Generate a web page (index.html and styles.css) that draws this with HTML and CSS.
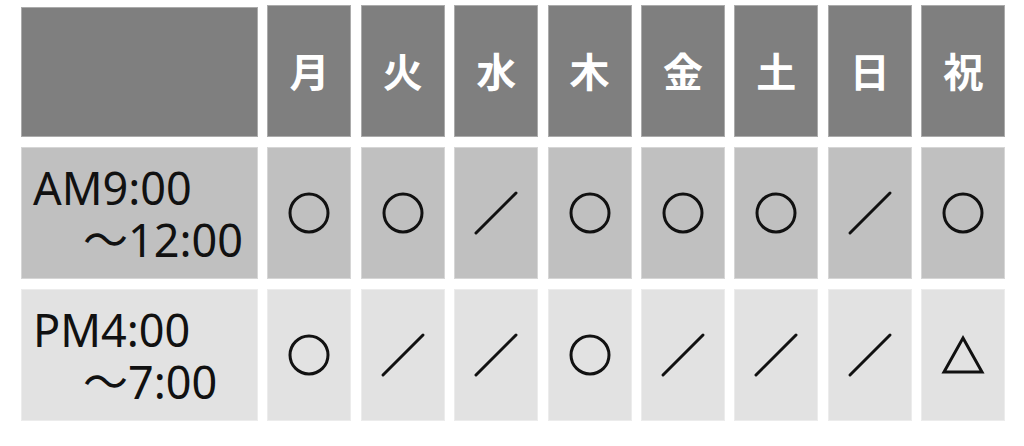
FILE: index.html
```html
<!DOCTYPE html>
<html lang="ja">
<head>
    <meta charset="UTF-8">
    <meta name="viewport" content="width=device-width, initial-scale=1.0">
    <link rel="stylesheet" href="styles.css">
</head>
<body>
    <div class="timetable">
        <!-- header row -->
        <div class="cell head corner"></div>
        <div class="cell head">月</div>
        <div class="cell head">火</div>
        <div class="cell head">水</div>
        <div class="cell head">木</div>
        <div class="cell head">金</div>
        <div class="cell head">土</div>
        <div class="cell head">日</div>
        <div class="cell head">祝</div>

        <!-- morning -->
        <div class="cell am time">
            <span class="from">AM9:00</span>
            <span class="to"><span class="wave">～</span>12:00</span>
        </div>
        <div class="cell am"><svg class="mark" viewBox="0 0 46 46"><circle cx="23" cy="23" r="19"/></svg></div>
        <div class="cell am"><svg class="mark" viewBox="0 0 46 46"><circle cx="23" cy="23" r="19"/></svg></div>
        <div class="cell am"><svg class="mark" viewBox="0 0 46 46"><line x1="3" y1="43" x2="43" y2="3"/></svg></div>
        <div class="cell am"><svg class="mark" viewBox="0 0 46 46"><circle cx="23" cy="23" r="19"/></svg></div>
        <div class="cell am"><svg class="mark" viewBox="0 0 46 46"><circle cx="23" cy="23" r="19"/></svg></div>
        <div class="cell am"><svg class="mark" viewBox="0 0 46 46"><circle cx="23" cy="23" r="19"/></svg></div>
        <div class="cell am"><svg class="mark" viewBox="0 0 46 46"><line x1="3" y1="43" x2="43" y2="3"/></svg></div>
        <div class="cell am"><svg class="mark" viewBox="0 0 46 46"><circle cx="23" cy="23" r="19"/></svg></div>

        <!-- evening -->
        <div class="cell pm time">
            <span class="from">PM4:00</span>
            <span class="to"><span class="wave">～</span>7:00</span>
        </div>
        <div class="cell pm"><svg class="mark" viewBox="0 0 46 46"><circle cx="23" cy="23" r="19"/></svg></div>
        <div class="cell pm"><svg class="mark" viewBox="0 0 46 46"><line x1="3" y1="43" x2="43" y2="3"/></svg></div>
        <div class="cell pm"><svg class="mark" viewBox="0 0 46 46"><line x1="3" y1="43" x2="43" y2="3"/></svg></div>
        <div class="cell pm"><svg class="mark" viewBox="0 0 46 46"><circle cx="23" cy="23" r="19"/></svg></div>
        <div class="cell pm"><svg class="mark" viewBox="0 0 46 46"><line x1="3" y1="43" x2="43" y2="3"/></svg></div>
        <div class="cell pm"><svg class="mark" viewBox="0 0 46 46"><line x1="3" y1="43" x2="43" y2="3"/></svg></div>
        <div class="cell pm"><svg class="mark" viewBox="0 0 46 46"><line x1="3" y1="43" x2="43" y2="3"/></svg></div>
        <div class="cell pm"><svg class="mark" viewBox="0 0 46 46"><polygon points="23,6 42,40 4,40"/></svg></div>
    </div>
</body>
</html>
```

FILE: styles.css
```css
* {
    margin: 0;
    padding: 0;
    box-sizing: border-box;
}
body {
    background-color: #FFFFFF;
    font-family: "Noto Sans", "Noto Sans CJK JP", sans-serif;
    color: #111;
}

/* Grid */
.timetable {
    display: grid;
    grid-template-columns: 237px repeat(8, 84px);
    grid-auto-rows: 132px;
    column-gap: 9.4px;
    row-gap: 10px;
    padding: 5px 0 0 21px;
}
.cell {
    display: flex;
    align-items: center;
    justify-content: center;
    border: 1px solid rgba(255, 255, 255, 0.35);
}

/* Header */
.head {
    background-color: #7F7F7F;
    color: #FFFFFF;
    font-family: "Noto Sans CJK JP", sans-serif;
    font-weight: 700;
    font-size: 40px;
    padding-bottom: 2px;
}
.corner {
    margin-top: 2px;
}

/* Rows */
.am {
    background-color: #C0C0C0;
}
.pm {
    background-color: #E2E2E2;
}

/* Time labels */
.time {
    flex-direction: column;
    align-items: flex-start;
    padding-left: 11px;
    font-size: 45px;
    line-height: 50px;
}
.time .from,
.time .to {
    display: block;
    height: 50px;
}
.time .to {
    padding-left: 50px;
}
.wave {
    font-family: "Noto Sans CJK JP", sans-serif;
    font-weight: 400;
}

/* Marks */
.mark {
    width: 46px;
    height: 46px;
    fill: none;
    stroke: #111;
    stroke-width: 3;
    stroke-linecap: round;
    stroke-linejoin: miter;
}
```
